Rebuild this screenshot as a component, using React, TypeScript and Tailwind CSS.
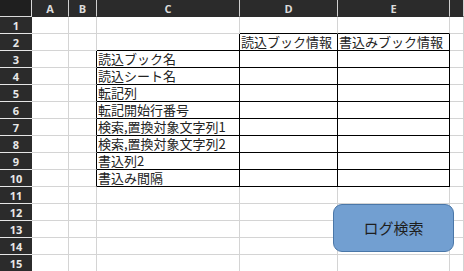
import React from "react";

const cols = ["A", "B", "C", "D", "E", ""];
const labels: Record<number, string> = {
  3: "読込ブック名",
  4: "読込シート名",
  5: "転記列",
  6: "転記開始行番号",
  7: "検索,置換対象文字列1",
  8: "検索,置換対象文字列2",
  9: "書込列2",
  10: "書込み間隔",
};

function cellClass(r: number, c: number): string {
  const inTable = (r >= 3 && r <= 10 && c >= 2 && c <= 4) || (r === 2 && c >= 3 && c <= 4);
  let right = "border-r-[#d4d4d4]";
  let bottom = "border-b-[#d4d4d4]";
  if (inTable) {
    right = "border-r-black";
    bottom = "border-b-black";
  }
  if (c === 1 && r >= 3 && r <= 10) right = "border-r-black";
  if (c === 2 && r === 2) right = "border-r-black";
  if (r === 1 && (c === 3 || c === 4)) bottom = "border-b-black";
  if (r === 2 && c === 2) bottom = "border-b-black";
  return `border-r border-b ${right} ${bottom}`;
}

export default function App() {
  const rows = Array.from({ length: 15 }, (_, i) => i + 1);
  return (
    <div
      className="relative w-[464px] h-[271px] overflow-hidden bg-white"
      style={{ fontFamily: '"Noto Sans CJK JP", "Noto Sans", sans-serif' }}
    >
      <div className="grid grid-cols-[32px_37px_28px_143px_98px_112px_1fr] grid-rows-[17px_repeat(15,17px)]">
        <div className="bg-[#1f1f1f] border-r border-b border-r-[#d9d9d9] border-b-[#d9d9d9]" />
        {cols.map((c, i) => (
          <div
            key={`h${i}`}
            className="bg-[#2b2b2b] border-r border-b border-r-[#cfcfcf] border-b-[#2b2b2b] flex items-center justify-center text-[11px] font-bold text-[#dcdcdc] leading-none"
            style={{ fontFamily: '"Open Sans", "Noto Sans", sans-serif' }}
          >
            {c}
          </div>
        ))}
        {rows.map((r) => (
          <React.Fragment key={r}>
            <div
              className="bg-[#2b2b2b] border-b border-b-[#e6e6e6] flex items-center justify-center text-[11px] font-bold text-[#e8e8e8] leading-none"
              style={{ fontFamily: '"Open Sans", "Noto Sans", sans-serif' }}
            >
              {r}
            </div>
            {[0, 1, 2, 3, 4, 5].map((c) => {
              let text = "";
              if (c === 2 && labels[r]) text = labels[r];
              if (r === 2 && c === 3) text = "読込ブック情報";
              if (r === 2 && c === 4) text = "書込みブック情報";
              return (
                <div
                  key={c}
                  className={`${cellClass(r, c)} flex items-end pl-[1px] pb-[1px] text-[13px] leading-[14px] text-[#222] whitespace-nowrap`}
                >
                  {text}
                </div>
              );
            })}
          </React.Fragment>
        ))}
      </div>
      <div className="absolute left-[333px] top-[204px] w-[121px] h-[48px] rounded-[9px] bg-[#729fd1] border border-[#4a77a8] flex items-center justify-center text-[15px] text-[#1e1e1e]">
        ログ検索
      </div>
    </div>
  );
}
